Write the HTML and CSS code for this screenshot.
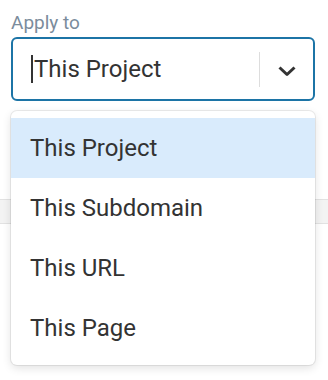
FILE: index.html
```html
<!DOCTYPE html>
<html>
<head>
  <title>Apply to</title>
  <link rel="stylesheet" href="styles.css">
</head>
<body>
  <div class="page">
    <div class="field">
      <label class="field-label">Apply to</label>
      <div class="select-box">
        <span class="select-value">This Project</span>
        <div class="select-indicator">
          <svg width="20" height="12" viewBox="0 0 20 12">
            <path d="M2.5 2.5 L10 9.5 L17.5 2.5" fill="none" stroke="#333" stroke-width="3" stroke-linejoin="round"/>
          </svg>
        </div>
      </div>
    </div>

    <div class="table-band"></div>

    <ul class="menu">
      <li class="menu-item active">This Project</li>
      <li class="menu-item">This Subdomain</li>
      <li class="menu-item">This URL</li>
      <li class="menu-item">This Page</li>
    </ul>
  </div>
</body>
</html>
```

FILE: styles.css
```css
body {
  margin: 0;
  background: #fff;
  font-family: Roboto, "Liberation Sans", sans-serif;
}

.page {
  position: relative;
  height: 380px;
}

.field {
  padding: 12px 13px 0 11px;
}

.field-label {
  display: block;
  font-size: 19px;
  line-height: 22px;
  color: #7b8c9c;
  margin-bottom: 3px;
}

.select-box {
  display: flex;
  align-items: center;
  height: 60px;
  border: 2px solid #1c74a6;
  border-radius: 6px;
  padding-left: 18px;
}

.select-value {
  flex: 1;
  font-size: 24px;
  color: #333;
  border-left: 2px solid #333;
  padding-left: 1px;
}

.select-indicator {
  width: 54px;
  height: 35px;
  border-left: 1px solid #ddd;
  display: flex;
  align-items: center;
  justify-content: center;
  padding-top: 3px;
  box-sizing: border-box;
}

.table-band {
  margin-top: 98px;
  height: 23px;
  background: #f3f3f3;
  border-top: 1px solid #e2e2e2;
  border-bottom: 1px solid #e2e2e2;
}

.menu {
  position: absolute;
  top: 111px;
  left: 11px;
  width: 304px;
  margin: 0;
  padding: 7px 0;
  list-style: none;
  background: #fff;
  border-radius: 6px;
  box-sizing: border-box;
  box-shadow: 0 0 0 1px rgba(0, 0, 0, 0.07), 0 3px 10px rgba(0, 0, 0, 0.12);
}

.menu-item {
  height: 60px;
  display: flex;
  align-items: center;
  padding-left: 19px;
  font-size: 24px;
  color: #333;
}

.menu-item.active {
  background: #d9ebfc;
}
```
